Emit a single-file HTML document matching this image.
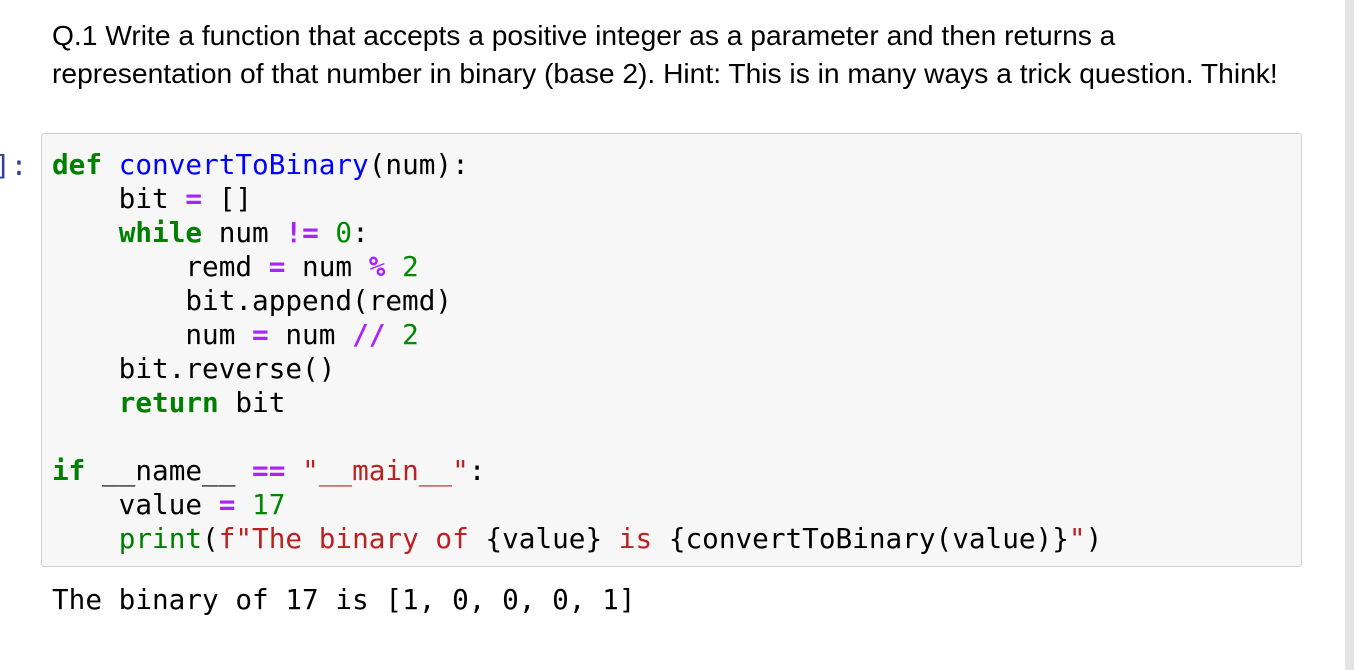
<!DOCTYPE html>
<html><head><style>
html,body{margin:0;padding:0;background:#fff;width:1354px;height:670px;overflow:hidden;position:relative}
.md{position:absolute;left:52px;top:16px;font-family:"Liberation Sans",Arial,sans-serif;font-size:28.2px;line-height:38px;color:#000;width:1240px}
.prompt{position:absolute;left:-6px;top:149px;font-family:"DejaVu Sans Mono","Liberation Mono",monospace;font-size:27.7px;line-height:34px;color:#303F9F;}
.box{position:absolute;left:41px;top:133px;width:1259px;height:432px;background:#f7f7f7;border:1.5px solid #cfcfcf;border-radius:3px}
pre{margin:0;font-family:"DejaVu Sans Mono","Liberation Mono",monospace;font-size:27.7px;line-height:34px;color:#000;position:absolute}
.code{left:52px;top:148px}
.out{left:52px;top:583px}
.k{color:#008000;font-weight:bold}.f{color:#0000ff}.o{color:#aa22ff;font-weight:bold}.n{color:#008800}.s{color:#ba2121}.b{color:#008000}
.sb{position:absolute;left:1345px;top:0;width:9px;height:670px;background:#e3e3e3}
</style></head><body>
<div class="md">Q.1 Write a function that accepts a positive integer as a parameter and then returns a<br>representation of that number in binary (base 2). Hint: This is in many ways a trick question. Think!</div>
<div class="box"></div>
<div class="prompt">]:</div>
<pre class="code"><span class="k">def</span> <span class="f">convertToBinary</span>(num):
    bit <span class="o">=</span> []
    <span class="k">while</span> num <span class="o">!=</span> <span class="n">0</span>:
        remd <span class="o">=</span> num <span class="o">%</span> <span class="n">2</span>
        bit.append(remd)
        num <span class="o">=</span> num <span class="o">//</span> <span class="n">2</span>
    bit.reverse()
    <span class="k">return</span> bit

<span class="k">if</span> __name__ <span class="o">==</span> <span class="s">"__main__"</span>:
    value <span class="o">=</span> <span class="n">17</span>
    <span class="b">print</span>(<span class="s">f"The binary of </span>{value}<span class="s"> is </span>{convertToBinary(value)}<span class="s">"</span>)</pre>
<pre class="out">The binary of 17 is [1, 0, 0, 0, 1]</pre>
<div class="sb"></div>
</body></html>
